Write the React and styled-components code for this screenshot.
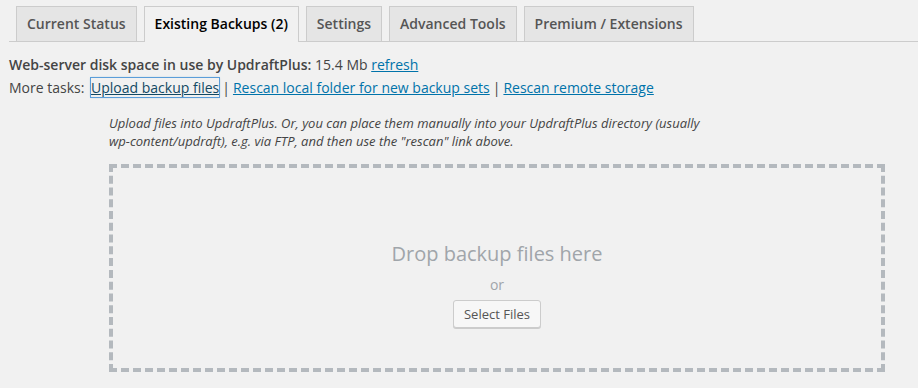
import React from "react";
import styled, { createGlobalStyle } from "styled-components";

const GlobalStyle = createGlobalStyle`
  html, body {
    margin: 0;
    padding: 0;
    background: #f1f1f1;
  }
  body {
    font-family: "Open Sans", "Liberation Sans", sans-serif;
    color: #444;
    font-size: 13px;
  }
`;

const Page = styled.div`
  padding: 6px 0 0 9px;
  width: 918px;
  height: 388px;
  box-sizing: border-box;
  overflow: hidden;
`;

const TabBar = styled.nav`
  display: flex;
  gap: 7px;
  padding-left: 7px;
  border-bottom: 1px solid #ccc;
`;

const Tab = styled.a`
  display: block;
  padding: 5px 10px;
  font-size: 14px;
  line-height: 24px;
  font-weight: 600;
  text-decoration: none;
  border: 1px solid #ccc;
  border-bottom: none;
  background: ${(p) => (p.$active ? "#f1f1f1" : "#e5e5e5")};
  color: ${(p) => (p.$active ? "#000" : "#555")};
  margin-bottom: ${(p) => (p.$active ? "-1px" : "0")};
  padding-bottom: ${(p) => (p.$active ? "6px" : "5px")};
  cursor: pointer;
`;

const InfoLine = styled.div`
  font-size: 14px;
  line-height: 23px;
  margin-top: ${(p) => p.$top || 0}px;
`;

const Label = styled.strong`
  font-weight: 600;
`;

const TasksLabel = styled.span`
  margin-right: 3px;
`;

const Link = styled.a`
  color: #0073aa;
  text-decoration: underline;
  cursor: pointer;
  ${(p) =>
    p.$focused &&
    `
    outline: 1px solid #5b9dd9;
    box-shadow: 0 0 2px rgba(30, 140, 190, 0.8);
    color: #124964;
  `}
`;

const Sep = styled.span`
  color: #444;
  margin: 0 3px;
`;

const Uploader = styled.div`
  margin-left: 100px;
  margin-top: 15px;
  width: 776px;
`;

const Hint = styled.p`
  margin: 0;
  max-width: 600px;
  font-size: 13px;
  line-height: 18px;
  font-style: italic;
  color: #444;
`;

const DropZone = styled.div`
  margin-top: 14px;
  height: 208px;
  box-sizing: border-box;
  border: 4px dashed #b4b9be;
  display: flex;
  flex-direction: column;
  align-items: center;
  padding-top: 72px;
`;

const DropInfo = styled.p`
  margin: 0;
  font-size: 20px;
  line-height: 28px;
  color: #a0a5aa;
`;

const Or = styled.p`
  margin: 7px 0 0;
  font-size: 14px;
  line-height: 20px;
  color: #a0a5aa;
`;

const Button = styled.button`
  margin-top: 5px;
  height: 28px;
  padding: 0 10px 1px;
  font-family: "Open Sans", "Liberation Sans", sans-serif;
  font-size: 13px;
  line-height: 26px;
  color: #555;
  background: #f7f7f7;
  border: 1px solid #ccc;
  border-radius: 3px;
  box-shadow: 0 1px 0 #ccc;
  box-sizing: border-box;
  cursor: pointer;
`;

const tabs = [
  "Current Status",
  "Existing Backups (2)",
  "Settings",
  "Advanced Tools",
  "Premium / Extensions",
];

export default function App() {
  return (
    <Page>
      <GlobalStyle />
      <TabBar>
        {tabs.map((t) => (
          <Tab key={t} $active={t.startsWith("Existing")}>
            {t}
          </Tab>
        ))}
      </TabBar>
      <InfoLine $top={11}>
        <Label>Web-server disk space in use by UpdraftPlus:</Label> 15.4 Mb{" "}
        <Link>refresh</Link>
      </InfoLine>
      <InfoLine>
        <TasksLabel>More tasks:</TasksLabel> <Link $focused>Upload backup files</Link>
        <Sep>|</Sep>
        <Link>Rescan local folder for new backup sets</Link>
        <Sep>|</Sep>
        <Link>Rescan remote storage</Link>
      </InfoLine>
      <Uploader>
        <Hint>
          Upload files into UpdraftPlus. Or, you can place them manually into
          your UpdraftPlus directory (usually wp-content/updraft), e.g. via
          FTP, and then use the "rescan" link above.
        </Hint>
        <DropZone>
          <DropInfo>Drop backup files here</DropInfo>
          <Or>or</Or>
          <Button>Select Files</Button>
        </DropZone>
      </Uploader>
    </Page>
  );
}
